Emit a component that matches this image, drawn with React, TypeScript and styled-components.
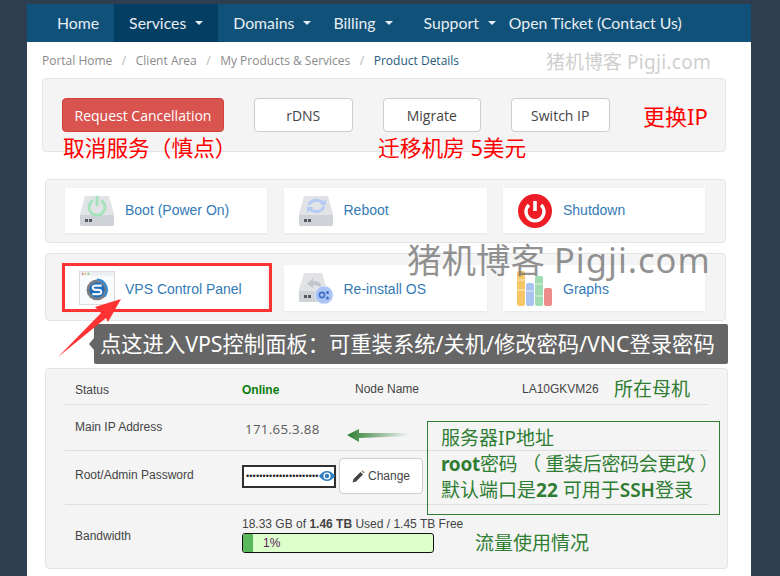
import React from 'react'
import styled, { createGlobalStyle } from 'styled-components'

const GlobalStyle = createGlobalStyle`
  html, body {
    margin: 0;
    height: 576px;
    overflow: hidden;
    background: #2c3e50;
  }
`

const NOTE = '"Noto Sans", "Noto Sans CJK SC", sans-serif'
const OPEN = '"Open Sans", "Noto Sans CJK SC", sans-serif'
const ARIAL = '"Liberation Sans", Arial, sans-serif'

const Sheet = styled.div`
  position: relative;
  width: 724px;
  height: 572px;
  margin: 4px 0 0 27px;
  background: #fff;
  overflow: hidden;
`

const Nav = styled.nav`
  display: flex;
  height: 38px;
  background: #0f5179;
  padding-left: 15px;
  font-family: Lato, sans-serif;
  font-size: 15.8px;
  color: #e8eef3;
`

const NavItem = styled.a<{ $active?: boolean; $right?: number }>`
  display: flex;
  align-items: center;
  gap: 9px;
  height: 38px;
  box-sizing: border-box;
  padding: 0 ${(p) => p.$right ?? 15}px 2px 15px;
  background: ${(p) => (p.$active ? '#043e63' : 'transparent')};
`

const NavLast = styled(NavItem)`
  padding-left: 0;
`

const NavCaret = styled.span`
  width: 0;
  height: 0;
  margin-top: 2px;
  border-left: 4px solid transparent;
  border-right: 4px solid transparent;
  border-top: 4px solid #e8eef3;
`

const Breadcrumb = styled.div`
  display: flex;
  align-items: center;
  height: 36px;
  padding-left: 15px;
  font-family: ${OPEN};
  font-size: 12px;
  color: #8a8a8a;
`

const CrumbSep = styled.span`
  margin: 0 9.5px;
  color: #b5b5b5;
`

const CrumbCurrent = styled.span`
  color: #245a7c;
`

const Well = styled.section<{ $left: number }>`
  margin: 0 25px 0 ${(p) => p.$left}px;
  background: #f4f4f4;
  border: 1px solid #e4e4e4;
  border-radius: 4px;
  box-sizing: border-box;
`

const ActionWell = styled(Well)`
  display: flex;
  gap: 30px;
  height: 74px;
  padding: 19px 0 0 19px;
`

const ActionButton = styled.button<{ $danger?: boolean }>`
  width: ${(p) => (p.$danger ? 162 : 98.5)}px;
  height: 34px;
  padding: 0;
  font-family: ${OPEN};
  font-size: 14px;
  color: ${(p) => (p.$danger ? '#fff' : '#444')};
  background: ${(p) => (p.$danger ? '#d9534f' : '#fff')};
  border: 1px solid ${(p) => (p.$danger ? '#d43f3a' : '#ccc')};
  border-radius: 4px;
`

const TileWell = styled(Well)`
  display: grid;
  grid-template-columns: 202px 203px 202px;
  column-gap: 16.5px;
  margin-top: 27px;
  padding: 8px 0 9px 19px;
`

const SecondTileWell = styled(TileWell)`
  margin-top: 10px;
  padding: 11px 0 9px 19px;
`

const Tile = styled.a<{ $tall?: boolean }>`
  display: flex;
  align-items: center;
  height: ${(p) => (p.$tall ? 46 : 45)}px;
  padding-left: 14px;
  background: #fff;
  box-shadow: 0 1px 2px rgba(0, 0, 0, 0.06);
  font-family: ${ARIAL};
  font-size: 14px;
  color: #337ab7;
`

const TileLabel = styled.span<{ $tall?: boolean }>`
  margin-top: ${(p) => (p.$tall ? 2 : -1)}px;
`

const TileIcon = styled.span`
  display: flex;
  justify-content: center;
  width: 36px;
  margin-right: 10px;
`

const Details = styled(Well)`
  height: 201px;
  margin-top: 47px;
  margin-right: 23px;
  padding: 8px 19px 0 19px;
  font-family: ${ARIAL};
  font-size: 12px;
  color: #444;
`

const Row = styled.div<{ $height: number }>`
  display: grid;
  grid-template-columns: 167px 1fr;
  align-items: center;
  height: ${(p) => p.$height}px;
  padding: 0 0 2px 10px;
  border-bottom: 1px solid #dedede;
  box-sizing: border-box;
`

const LastRow = styled(Row)`
  padding-bottom: 0;
  border-bottom: none;
`

const TopRow = styled(Row)`
  grid-template-columns: 167px 113px 167px 1fr;
`

const NodeLabel = styled.span`
  margin-top: -2px;
`

const PasswordRow = styled(Row)`
  padding-bottom: 3px;
`

const PasswordLabel = styled.span`
  margin-top: -2px;
`

const OnlineText = styled.b`
  color: #0a7d0a;
`

const IpText = styled.span`
  margin: 4px 0 0 3px;
  font-family: ${OPEN};
  font-size: 13.3px;
  letter-spacing: 0.3px;
  color: #5a5a5a;
`

const PasswordCell = styled.div`
  display: flex;
  align-items: center;
  gap: 3px;
`

const PasswordBox = styled.div`
  position: relative;
  display: flex;
  align-items: center;
  width: 94px;
  height: 23px;
  padding-left: 2px;
  background: #fff;
  border: 2px solid #2f2f2f;
  box-sizing: border-box;
  overflow: visible;
  font-size: 9px;
  letter-spacing: 0.15px;
  white-space: nowrap;
  color: #222;
`

const EyeSlot = styled.span`
  position: absolute;
  right: -2px;
  top: 2px;
  display: flex;
`

const ChangeButton = styled.button`
  display: flex;
  align-items: center;
  gap: 3px;
  width: 84px;
  height: 36px;
  padding: 0 0 0 12px;
  background: #fff;
  border: 1px solid #ccc;
  border-radius: 4px;
  font-family: ${ARIAL};
  font-size: 12px;
  color: #444;
`

const UsageText = styled.div`
  margin-top: -2px;
`

const UsageBar = styled.div`
  display: flex;
  align-items: center;
  width: 192px;
  height: 20px;
  margin-top: 2px;
  background: #ddffcc;
  border: 1px solid #111;
  border-radius: 3px;
  box-sizing: border-box;
  overflow: hidden;
`

const UsageFill = styled.div`
  width: 10px;
  height: 100%;
  background: #5cb85c;
`

const UsageLabel = styled.span`
  margin-left: 10px;
  color: #5a1a5a;
`

const Note = styled.span`
  position: absolute;
  font-family: ${NOTE};
  font-size: 19px;
  line-height: 24px;
  white-space: nowrap;
`

const CancelNote = styled(Note)`
  left: 36px;
  top: 132px;
  font-size: 21.7px;
  color: #f00;
`

const MigrateNote = styled(Note)`
  left: 351px;
  top: 132px;
  font-size: 21.7px;
  color: #f00;
`

const SwitchNote = styled(Note)`
  left: 616px;
  top: 100px;
  font-size: 22px;
  color: #f00;
`

const Watermark = styled.span`
  position: absolute;
  left: 519px;
  top: 44px;
  font-family: ${NOTE};
  font-size: 19px;
  line-height: 28px;
  color: #cfcfcf;
  white-space: nowrap;
`

const BigWatermark = styled(Watermark)`
  left: 380px;
  top: 232px;
  font-size: 34.5px;
  line-height: 48px;
  color: rgba(110, 110, 110, 0.75);
`

const WatermarkLatin = styled.span<{ $spacing: number }>`
  letter-spacing: ${(p) => p.$spacing}px;
`

const Highlight = styled.div`
  position: absolute;
  left: 35px;
  top: 259px;
  width: 210px;
  height: 49px;
  border: 3px solid #ff3333;
  box-sizing: border-box;
`

const PointerArrow = styled.svg`
  position: absolute;
  left: 28px;
  top: 290px;
`

const Callout = styled.div`
  position: absolute;
  left: 67px;
  top: 320px;
  width: 634px;
  height: 40px;
  padding-left: 6px;
  box-sizing: border-box;
  background: #666;
  border-radius: 2px;
  font-family: ${NOTE};
  font-size: 21.3px;
  line-height: 40px;
  color: #fff;
  white-space: nowrap;

  &::before {
    content: '';
    position: absolute;
    left: -5px;
    top: 14px;
    border-top: 6px solid transparent;
    border-bottom: 6px solid transparent;
    border-right: 5px solid #666;
  }
`

const GreenNote = styled(Note)`
  color: #2e7d32;
`

const NodeNote = styled(GreenNote)`
  left: 587px;
  top: 373px;
`

const TrafficNote = styled(GreenNote)`
  left: 448px;
  top: 527px;
`

const GreenArrow = styled.svg`
  position: absolute;
  left: 320px;
  top: 425px;
`

const IpBox = styled.div`
  position: absolute;
  left: 400px;
  top: 417px;
  width: 293px;
  height: 94px;
  padding: 3px 0 0 13px;
  box-sizing: border-box;
  border: 1px solid #2e7d32;
  font-family: ${NOTE};
  font-size: 19px;
  line-height: 26px;
  color: #2e7d32;
  white-space: nowrap;
`

const RootLine = styled.span`
  letter-spacing: -0.3px;
`

const MediumText = styled.span`
  font-weight: 600;
`

const Drive = ({ children }: { children?: React.ReactNode }) => (
  <svg width="36" height="32" viewBox="0 0 36 32">
    <path d="M6 1h24l5 18v10a2 2 0 0 1-2 2H3a2 2 0 0 1-2-2V19z" fill="#e1e3e7" />
    <path d="M1 20h34v9a2 2 0 0 1-2 2H3a2 2 0 0 1-2-2z" fill="#cfd2d7" />
    <rect x="6" y="24" width="3" height="3" fill="#55585e" />
    <rect x="10" y="24" width="3" height="3" fill="#55585e" />
    {children}
  </svg>
)

const BootIcon = () => (
  <Drive>
    <path d="M13 6a8 8 0 1 0 10 0" fill="none" stroke="#a6e3bd" strokeWidth="3" strokeLinecap="round" />
    <path d="M18 2v8" stroke="#a6e3bd" strokeWidth="3" strokeLinecap="round" />
  </Drive>
)

const RebootIcon = () => (
  <Drive>
    <path d="M11 10a8 7 0 0 1 14-2M26 11a8 7 0 0 1-14 3" fill="none" stroke="#b4ccf3" strokeWidth="3" />
    <path d="M22 10h6V4zM15 12H9v6z" fill="#b4ccf3" />
  </Drive>
)

const ReinstallIcon = () => (
  <svg width="36" height="32" viewBox="0 0 36 32">
    <path d="M6 1h18l5 16v11a2 2 0 0 1-2 2H3a2 2 0 0 1-2-2V17z" fill="#e1e3e7" />
    <rect x="1" y="19" width="26" height="11" fill="#cfd2d7" />
    <rect x="6" y="23" width="3" height="3" fill="#55585e" />
    <rect x="10" y="23" width="3" height="3" fill="#55585e" />
    <path d="M9 12l6-6v3c6 0 9 3 9 8-2-3-5-4-9-4v3z" fill="#c2c5ca" />
    <circle cx="26" cy="23" r="9" fill="#a9c3f5" stroke="#dbe6fb" />
    <circle cx="24" cy="23" r="2.6" fill="none" stroke="#3f6fc4" strokeWidth="1.6" />
    <circle cx="29.5" cy="20.5" r="1.5" fill="#3f6fc4" />
    <circle cx="29.5" cy="26" r="1.5" fill="#3f6fc4" />
  </svg>
)

const ShutdownIcon = () => (
  <svg width="34" height="34" viewBox="0 0 34 34">
    <circle cx="17" cy="17" r="17" fill="#ee1c25" />
    <path d="M11 11a9 9 0 1 0 12 0" fill="none" stroke="#fff" strokeWidth="3.4" />
    <path d="M17 7v10" stroke="#fff" strokeWidth="3.6" />
  </svg>
)

const PanelIcon = () => (
  <svg width="38" height="36" viewBox="0 0 38 36">
    <rect x="0.5" y="0.5" width="37" height="35" fill="#fafbfc" stroke="#d6d8dc" />
    <rect x="1" y="1" width="36" height="4" fill="#eceef1" />
    <circle cx="4" cy="3" r="1" fill="#e57373" />
    <circle cx="7" cy="3" r="1" fill="#e8c25a" />
    <circle cx="10" cy="3" r="1" fill="#7bc67b" />
    <circle cx="19" cy="20" r="11" fill="#7b7f85" />
    <path d="M19 9a11 11 0 0 1 8 18" fill="none" stroke="#2e8bd6" strokeWidth="2" />
    <circle cx="19" cy="20" r="8" fill="#1f6db8" />
    <path
      d="M24 15.500h-6.500q-3 0-3 2.200t3 2.300h3q3 0 3 2.300t-3 2.200H14"
      fill="none"
      stroke="#eef4fa"
      strokeWidth="2.200"
    />
  </svg>
)

const GraphsIcon = () => (
  <svg width="36" height="36" viewBox="0 0 36 36">
    <rect x="0" y="1" width="8" height="35" rx="2" fill="#f7c766" />
    <rect x="9" y="13" width="8" height="23" rx="2" fill="#a9c3f0" />
    <rect x="18" y="6" width="8" height="30" rx="2" fill="#9fdcb0" />
    <rect x="27" y="18" width="8" height="18" rx="2" fill="#ee8b8b" />
    <path d="M0 10h8M0 20h8M9 21h8M18 14h8M18 26h8" stroke="#fff" strokeOpacity="0.7" />
  </svg>
)

const EyeIcon = () => (
  <svg width="18" height="14" viewBox="0 0 18 14">
    <path d="M1 7c2.500-3.500 5-5 8-5s5.500 1.500 8 5c-2.500 3.500-5 5-8 5s-5.500-1.500-8-5z" fill="#2f7fc1" />
    <circle cx="9" cy="7" r="3.600" fill="#fff" />
    <circle cx="9" cy="7" r="2.200" fill="#2f7fc1" />
  </svg>
)

const PencilIcon = () => (
  <svg width="13" height="13" viewBox="0 0 13 13">
    <path d="M0.500 12.500l1-3.500 7-7 2.500 2.500-7 7z" fill="#444" />
    <path d="M9.500 1l1-0.500 2 2-0.500 1z" fill="#8a5a2a" />
  </svg>
)

const tiles = [
  { label: 'Boot (Power On)', icon: <BootIcon /> },
  { label: 'Reboot', icon: <RebootIcon /> },
  { label: 'Shutdown', icon: <ShutdownIcon /> },
]

const moreTiles = [
  { label: 'VPS Control Panel', icon: <PanelIcon /> },
  { label: 'Re-install OS', icon: <ReinstallIcon /> },
  { label: 'Graphs', icon: <GraphsIcon /> },
]

const App = () => {
  return (
    <>
      <GlobalStyle />
      <Sheet>
        <Nav>
          <NavItem>Home</NavItem>
          <NavItem $active>
            Services <NavCaret />
          </NavItem>
          <NavItem $right={7}>
            Domains <NavCaret />
          </NavItem>
          <NavItem $right={16}>
            Billing <NavCaret />
          </NavItem>
          <NavItem $right={13}>
            Support <NavCaret />
          </NavItem>
          <NavLast>Open Ticket (Contact Us)</NavLast>
        </Nav>
        <Breadcrumb>
          Portal Home<CrumbSep>/</CrumbSep>Client Area<CrumbSep>/</CrumbSep>
          My Products &amp; Services<CrumbSep>/</CrumbSep>
          <CrumbCurrent>Product Details</CrumbCurrent>
        </Breadcrumb>
        <ActionWell $left={15}>
          <ActionButton $danger>Request Cancellation</ActionButton>
          <ActionButton>rDNS</ActionButton>
          <ActionButton>Migrate</ActionButton>
          <ActionButton>Switch IP</ActionButton>
        </ActionWell>
        <TileWell $left={18}>
          {tiles.map((t) => (
            <Tile key={t.label}>
              <TileIcon>{t.icon}</TileIcon>
              <TileLabel>{t.label}</TileLabel>
            </Tile>
          ))}
        </TileWell>
        <SecondTileWell $left={18}>
          {moreTiles.map((t) => (
            <Tile key={t.label} $tall>
              <TileIcon>{t.icon}</TileIcon>
              <TileLabel $tall>{t.label}</TileLabel>
            </Tile>
          ))}
        </SecondTileWell>
        <Details $left={18}>
          <TopRow $height={28}>
            <span>Status</span>
            <OnlineText>Online</OnlineText>
            <NodeLabel>Node Name</NodeLabel>
            <NodeLabel>LA10GKVM26</NodeLabel>
          </TopRow>
          <Row $height={46}>
            <span>Main IP Address</span>
            <IpText>171.65.3.88</IpText>
          </Row>
          <PasswordRow $height={54}>
            <PasswordLabel>Root/Admin Password</PasswordLabel>
            <PasswordCell>
              <PasswordBox>
                ••••••••••••••••••••••
                <EyeSlot>
                  <EyeIcon />
                </EyeSlot>
              </PasswordBox>
              <ChangeButton>
                <PencilIcon /> Change
              </ChangeButton>
            </PasswordCell>
          </PasswordRow>
          <LastRow $height={62}>
            <span>Bandwidth</span>
            <div>
              <UsageText>
                18.33 GB of <b>1.46 TB</b> Used / 1.45 TB Free
              </UsageText>
              <UsageBar>
                <UsageFill />
                <UsageLabel>1%</UsageLabel>
              </UsageBar>
            </div>
          </LastRow>
        </Details>

        <Watermark>
          猪机博客 <WatermarkLatin $spacing={0.3}>Pigji.com</WatermarkLatin>
        </Watermark>
        <CancelNote>取消服务（慎点）</CancelNote>
        <MigrateNote>迁移机房 5美元</MigrateNote>
        <SwitchNote>更换IP</SwitchNote>
        <Highlight />
        <BigWatermark>
          猪机博客 <WatermarkLatin $spacing={1}>Pigji.com</WatermarkLatin>
        </BigWatermark>
        <Callout>点这进入VPS控制面板：可重装系统/关机/修改密码/VNC登录密码</Callout>
        <PointerArrow width="70" height="72" viewBox="0 0 70 72">
          <path d="M3 63L46 19l-6-6 26-8-13 23-2-4z" fill="#ff3333" />
        </PointerArrow>
        <NodeNote>所在母机</NodeNote>
        <GreenArrow width="62" height="14" viewBox="0 0 62 14">
          <defs>
            <linearGradient id="fade" x1="0" x2="1" y1="0" y2="0">
              <stop offset="0" stopColor="#2e7d32" />
              <stop offset="1" stopColor="#2e7d32" stopOpacity="0" />
            </linearGradient>
          </defs>
          <path d="M0 6l12-6v4h50v3L12 9v4z" fill="url(#fade)" />
        </GreenArrow>
        <IpBox>
          服务器IP地址
          <br />
          <RootLine>
            <b>root</b>密码 （ 重装后密码会更改 ）
          </RootLine>
          <br />
          默认端口是<b>22</b> 可用于<MediumText>SSH</MediumText>登录
        </IpBox>
        <TrafficNote>流量使用情况</TrafficNote>
      </Sheet>
    </>
  )
}

export default App
